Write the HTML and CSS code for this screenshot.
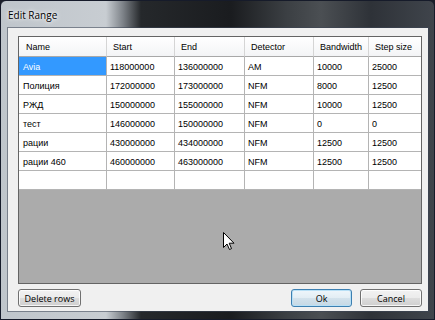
FILE: index.html
```html
<!DOCTYPE html>
<html lang="ru">

<head>
    <meta charset="UTF-8">
    <title>Edit Range</title>
    <link rel="stylesheet" href="styles.css">
</head>

<body>
    <div class="window">
        <!-- Title bar -->
        <div class="titlebar">Edit Range</div>

        <!-- Client area -->
        <div class="client">
            <div class="grid-view">
                <table class="grid">
                    <colgroup>
                        <col class="c-name">
                        <col class="c-start">
                        <col class="c-end">
                        <col class="c-det">
                        <col class="c-bw">
                        <col class="c-step">
                    </colgroup>
                    <thead>
                        <tr>
                            <th>Name</th>
                            <th>Start</th>
                            <th>End</th>
                            <th>Detector</th>
                            <th>Bandwidth</th>
                            <th>Step size</th>
                        </tr>
                    </thead>
                    <tbody>
                        <tr>
                            <td class="selected">Avia</td>
                            <td>118000000</td>
                            <td>136000000</td>
                            <td>AM</td>
                            <td>10000</td>
                            <td>25000</td>
                        </tr>
                        <tr>
                            <td>Полиция</td>
                            <td>172000000</td>
                            <td>173000000</td>
                            <td>NFM</td>
                            <td>8000</td>
                            <td>12500</td>
                        </tr>
                        <tr>
                            <td>РЖД</td>
                            <td>150000000</td>
                            <td>155000000</td>
                            <td>NFM</td>
                            <td>10000</td>
                            <td>12500</td>
                        </tr>
                        <tr>
                            <td>тест</td>
                            <td>146000000</td>
                            <td>150000000</td>
                            <td>NFM</td>
                            <td>0</td>
                            <td>0</td>
                        </tr>
                        <tr>
                            <td>рации</td>
                            <td>430000000</td>
                            <td>434000000</td>
                            <td>NFM</td>
                            <td>12500</td>
                            <td>12500</td>
                        </tr>
                        <tr>
                            <td>рации 460</td>
                            <td>460000000</td>
                            <td>463000000</td>
                            <td>NFM</td>
                            <td>12500</td>
                            <td>12500</td>
                        </tr>
                        <tr>
                            <td></td>
                            <td></td>
                            <td></td>
                            <td></td>
                            <td></td>
                            <td></td>
                        </tr>
                    </tbody>
                </table>
            </div>

            <div class="buttons">
                <button class="btn btn-delete">Delete rows</button>
                <div class="spacer"></div>
                <button class="btn btn-default">Ok</button>
                <button class="btn">Cancel</button>
            </div>
        </div>

        <!-- Mouse pointer -->
        <svg class="cursor" width="13" height="19" viewBox="0 0 13 19">
            <path d="M0.5 0.5 L0.5 15.5 L4 12 L6.5 17.5 L8.5 16.6 L6.2 11.2 L11 11.2 Z" fill="#fff" stroke="#000" stroke-width="1" stroke-linejoin="round" />
        </svg>
    </div>
</body>

</html>
```

FILE: styles.css
```css
/* Reset */
* {
    margin: 0;
    padding: 0;
    box-sizing: border-box;
}

:root {
    --face: #f0f0f0;
    --grid-line: #b4b4b4;
    --workspace: #ababab;
    --select: #3399ff;
}

body {
    width: 435px;
    height: 320px;
    overflow: hidden;
    background: #1b1f2a;
}

/* Window frame (Aero glass) */
.window {
    position: relative;
    width: 435px;
    height: 320px;
    display: flex;
    flex-direction: column;
    padding: 0 6px 8px 7px;
    border: 1px solid #161b2a;
    border-radius: 6px 6px 0 0;
    background: linear-gradient(90deg, #bfc5cb 0, #c8cdd2 105px, #7d8288 122px, #25282b 140px, #1a1c1f 230px, #3b3f43 285px, #4b4f53 320px, #2e3238 370px, #40454c 435px);
}

.titlebar {
    height: 27px;
    display: flex;
    align-items: center;
    font-family: "Open Sans", "Liberation Sans", sans-serif;
    font-size: 10px;
    color: #000;
    text-shadow: 0 0 6px #fff, 0 0 3px #fff;
}

.client {
    flex: 1;
    display: flex;
    flex-direction: column;
    gap: 5px;
    padding: 8px 6px 4px 10px;
    background: var(--face);
    box-shadow: 0 0 0 1px rgba(60, 70, 85, 0.55);
}

/* Data grid */
.grid-view {
    height: 248px;
    border: 1px solid #646464;
    background: var(--workspace);
    overflow: hidden;
}

.grid {
    width: 100%;
    table-layout: fixed;
    border-collapse: separate;
    border-spacing: 0;
    font-family: "Liberation Sans", Arial, sans-serif;
    font-size: 9px;
    color: #000;
}

.c-name { width: 88px; }
.c-start { width: 68px; }
.c-end { width: 70px; }
.c-det { width: 69px; }
.c-bw { width: 55px; }
.c-step { width: 53px; }

.grid th {
    height: 20px;
    padding: 1px 0 0 6px;
    text-align: left;
    font-weight: normal;
    background: linear-gradient(#ffffff, #f3f4f6);
    border-right: 1px solid #d5d5d5;
    border-bottom: 1px solid #a8a8a8;
    white-space: nowrap;
}

.grid th:first-child {
    padding-left: 7px;
}

.grid td {
    height: 19px;
    padding: 1px 0 0 3px;
    background: #fff;
    border-right: 1px solid var(--grid-line);
    border-bottom: 1px solid var(--grid-line);
    white-space: nowrap;
    overflow: hidden;
}

.grid td:first-child {
    padding-left: 4px;
}

.grid th:last-child,
.grid td:last-child {
    border-right: none;
}

.grid td.selected {
    background: var(--select);
    color: #fff;
}

/* Buttons */
.buttons {
    display: flex;
    gap: 8px;
}

.spacer {
    flex: 1;
}

.btn {
    width: 62px;
    height: 18px;
    font-family: "Open Sans", "Liberation Sans", sans-serif;
    font-size: 9px;
    color: #000;
    border: 1px solid #707070;
    border-radius: 3px;
    background: linear-gradient(#f2f2f2 0, #ebebeb 50%, #dddddd 50%, #cfcfcf 100%);
    box-shadow: inset 0 0 0 1px rgba(255, 255, 255, 0.8);
}

.btn-delete {
    width: 63px;
}

.btn-default {
    width: 61px;
    border-color: #3c7fb1;
    background: linear-gradient(#eef6fb 0, #e2edf4 50%, #d3e2ec 50%, #c6d8e4 100%);
    box-shadow: inset 0 0 0 1px #b8e0f6;
}

/* Mouse pointer over the grid */
.cursor {
    position: absolute;
    left: 222px;
    top: 231px;
}
```
